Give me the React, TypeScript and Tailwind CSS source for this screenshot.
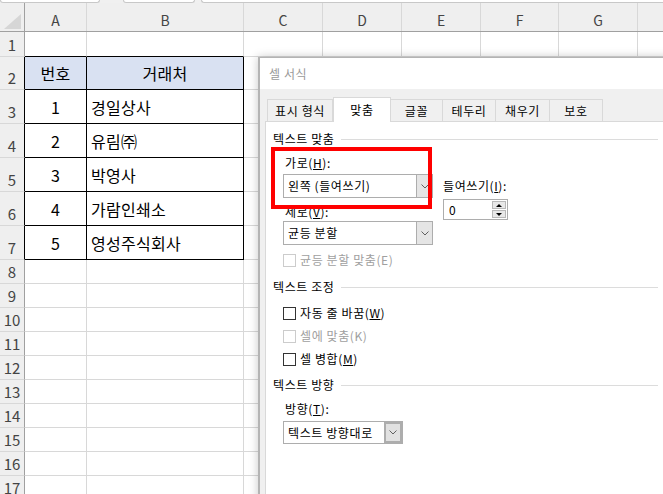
import React from 'react';

// Excel sheet with the 셀 서식 (Format Cells) dialog on top, 맞춤 tab open.

const COLS = [
  { label: 'A', w: 'w-[62px]' },
  { label: 'B', w: 'w-[157px]' },
  { label: 'C', w: 'w-[79px]' },
  { label: 'D', w: 'w-[79px]' },
  { label: 'E', w: 'w-[79px]' },
  { label: 'F', w: 'w-[78px]' },
  { label: 'G', w: 'w-[79px]' },
  { label: '', w: 'w-[40px]' },
];

const ROW_H = [
  'h-[25px]', 'h-[33px]', 'h-[34px]', 'h-[34px]', 'h-[34px]', 'h-[34px]', 'h-[34px]',
  'h-[24px]', 'h-[24px]', 'h-[24px]', 'h-[24px]', 'h-[24px]', 'h-[24px]', 'h-[24px]',
  'h-[24px]', 'h-[24px]', 'h-[24px]',
];

const DATA: Record<number, [string, string]> = {
  2: ['번호', '거래처'],
  3: ['1', '경일상사'],
  4: ['2', '유림㈜'],
  5: ['3', '박영사'],
  6: ['4', '가람인쇄소'],
  7: ['5', '영성주식회사'],
};

const inTable = (r: number) => r >= 2 && r <= 7;

function Sheet() {
  return (
    <div className="flex flex-col bg-white font-['Noto_Sans_CJK_KR','Noto_Sans',sans-serif]">
      {/* formula bar bottom edges */}
      <div className="flex h-[3px] bg-[#f0f0f0]">
        <div className="w-[100px] rounded-b-[3px] border-x border-b border-[#c8c8c8] bg-white" />
        <div className="ml-[23px] w-[72px] rounded-b-[3px] border-x border-b border-[#c8c8c8] bg-white" />
        <div className="ml-[6px] flex-1 rounded-bl-[3px] border-l border-b border-[#c8c8c8] bg-white" />
      </div>

      {/* column headers */}
      <div className="flex h-[29px] border-b border-[#a0a0a0] bg-[#efefef] text-[14px] text-[#444]">
        <div className="flex w-[25px] shrink-0 items-end justify-center border-r border-[#a0a0a0] pb-[2px]">
          <svg width="17" height="15" viewBox="0 0 17 15">
            <polygon points="17,0 17,15 0,15" fill="#d6d6d6" />
          </svg>
        </div>
        {COLS.map((c, i) => (
          <div
            key={i}
            className={`${c.w} flex shrink-0 items-center justify-center border-r border-[#d8d8d8] pt-[6px] leading-none`}
          >
            {c.label}
          </div>
        ))}
      </div>

      {ROW_H.map((h, idx) => {
        const r = idx + 1;
        const d = DATA[r];
        const table = inTable(r);
        return (
          <div key={r} className={`flex ${h} shrink-0`}>
            <div
              className={`flex w-[25px] shrink-0 items-end justify-center border-b border-[#d8d8d8] bg-[#efefef] pb-[4px] text-[15px] leading-none text-[#444] ${
                table ? 'border-r border-r-black' : 'border-r border-r-[#a0a0a0]'
              }`}
            >
              {r}
            </div>
            {COLS.map((c, ci) => {
              const tableCell = ci < 2 && table;
              const aboveTable = ci < 2 && r === 1;
              let cls = 'border-r border-b border-[#d8d8d8]';
              if (tableCell) cls = 'border-r border-b border-black';
              else if (aboveTable) cls = 'border-r border-r-[#d8d8d8] border-b border-b-black';
              const fill = tableCell && r === 2 ? 'bg-[#d9e1f2]' : '';
              const align =
                ci === 0 || r === 2 ? 'justify-center' : 'justify-start pl-[4px]';
              return (
                <div
                  key={ci}
                  className={`${c.w} flex shrink-0 items-center ${align} ${cls} ${fill} text-[16px] leading-none tracking-[0.3px] text-black`}
                >
                  {d && ci < 2 ? d[ci] : null}
                </div>
              );
            })}
          </div>
        );
      })}
    </div>
  );
}

function Chevron() {
  return (
    <svg width="8" height="5" viewBox="0 0 8 5">
      <polyline points="0.5,0.5 4,4 7.5,0.5" fill="none" stroke="#606060" strokeWidth="1" />
    </svg>
  );
}

function Combo({ text, w, thick }: { text: string; w: string; thick?: boolean }) {
  return (
    <div className={`flex ${w} h-full border border-[#adadad] bg-white`}>
      <div className="flex flex-1 items-center pl-[4px] text-[12px] leading-none text-black">{text}</div>
      {thick ? (
        <div className="flex w-[18px] items-center justify-center border-2 border-[#adadad] bg-[#e1e1e1]">
          <Chevron />
        </div>
      ) : (
        <div className="flex w-[16px] items-center justify-center border-l border-[#adadad] bg-[#e5e5e5]">
          <Chevron />
        </div>
      )}
    </div>
  );
}

function Check({ label, disabled }: { label: React.ReactNode; disabled?: boolean }) {
  return (
    <div className={`flex h-[14px] items-center gap-[4px] ${disabled ? 'text-[#a0a0a0]' : 'text-black'}`}>
      <div
        className={`h-[13px] w-[13px] border bg-white ${disabled ? 'border-[#cccccc]' : 'border-[#333333]'}`}
      />
      <span className="text-[12px] leading-none">{label}</span>
    </div>
  );
}

function GroupHeader({ title, className }: { title: string; className: string }) {
  return (
    <div className={`flex h-[16px] items-center gap-[6px] pl-[7px] pr-[9px] ${className}`}>
      <span className="text-[12px] leading-none text-black">{title}</span>
      <div className="h-px flex-1 bg-[#dcdcdc]" />
    </div>
  );
}

const TABS = [
  { label: '표시 형식', w: 'w-[66px]' },
  { label: '맞춤', w: 'w-[58px]' },
  { label: '글꼴', w: 'w-[52px]' },
  { label: '테두리', w: 'w-[53px]' },
  { label: '채우기', w: 'w-[54px]' },
  { label: '보호', w: 'w-[53px]' },
];

function FormatDialog() {
  return (
    <div className="absolute left-[258px] top-[57px] flex h-[460px] w-[420px] flex-col border-l-2 border-t border-[#b4b4b4] bg-[#f0f0f0] font-['Noto_Sans_CJK_KR','Noto_Sans',sans-serif] tracking-[0.6px] shadow-[0_0_9px_rgba(0,0,0,0.22)]">
      {/* title bar */}
      <div className="flex h-[31px] shrink-0 items-center bg-white pl-[9px] text-[12px] leading-none text-[#9a9a9a]">
        셀 서식
      </div>

      {/* tabs */}
      <div className="flex h-[32px] shrink-0 items-end pl-[7px]">
        {TABS.map((t, i) =>
          i === 1 ? (
            <div
              key={t.label}
              className={`${t.w} relative -mb-px flex h-[25px] items-center justify-center border-x border-t border-[#d9d9d9] bg-white pb-[1px] text-[12px] leading-none text-black`}
            >
              {t.label}
            </div>
          ) : (
            <div
              key={t.label}
              className={`${t.w} flex h-[22px] items-center justify-center border-t border-r border-[#d9d9d9] ${
                i === 0 ? 'border-l' : ''
              } bg-[#f0f0f0] text-[12px] leading-none text-black`}
            >
              {t.label}
            </div>
          ),
        )}
      </div>

      {/* content panel */}
      <div className="ml-[5px] mr-[10px] flex flex-1 flex-col border-l border-t border-r border-[#d9d9d9] bg-white text-[12px] leading-none text-black">
        <GroupHeader title="텍스트 맞춤" className="mt-[9px]" />

        <div className="flex pl-[17px]">
          <div className="flex w-[150px] flex-col">
            <div className="mt-[9px] flex h-[14px] items-center pl-[2px]">
              가로(<u>H</u>):
            </div>
            <div className="mt-[4px] h-[24px]">
              <Combo text="왼쪽 (들여쓰기)" w="w-[150px]" />
            </div>
            <div className="mt-[7px] flex h-[14px] items-center pl-[2px]">
              세로(<u>V</u>):
            </div>
            <div className="mt-[2px] h-[24px]">
              <Combo text="균등 분할" w="w-[150px]" />
            </div>
          </div>
          <div className="ml-[10px] flex flex-col">
            <div className="mt-[32px] flex h-[14px] items-center">
              들여쓰기(<u>I</u>):
            </div>
            <div className="mt-[6px] flex h-[21px] w-[65px] border border-[#adadad] bg-white">
              <div className="flex flex-1 items-center pl-[5px]">0</div>
              <div className="my-[1px] mr-[1px] flex w-[14px] flex-col gap-px">
                <div className="flex flex-1 items-center justify-center border border-[#b8b8b8] bg-[#e8e8e8]">
                  <svg width="6" height="3" viewBox="0 0 6 3">
                    <polygon points="3,0 6,3 0,3" fill="#000" />
                  </svg>
                </div>
                <div className="flex flex-1 items-center justify-center border border-[#b8b8b8] bg-[#e8e8e8]">
                  <svg width="6" height="3" viewBox="0 0 6 3">
                    <polygon points="0,0 6,0 3,3" fill="#000" />
                  </svg>
                </div>
              </div>
            </div>
          </div>
        </div>

        <div className="mt-[8px] pl-[17px]">
          <Check label="균등 분할 맞춤(E)" disabled />
        </div>

        <GroupHeader title="텍스트 조정" className="mt-[12px]" />
        <div className="mt-[11px] pl-[17px]">
          <Check label={<>자동 줄 바꿈(<u>W</u>)</>} />
        </div>
        <div className="mt-[9px] pl-[17px]">
          <Check label="셀에 맞춤(K)" disabled />
        </div>
        <div className="mt-[9px] pl-[17px]">
          <Check label={<>셀 병합(<u>M</u>)</>} />
        </div>

        <GroupHeader title="텍스트 방향" className="mt-[11px]" />
        <div className="mt-[9px] flex h-[14px] items-center pl-[19px]">
          방향(<u>T</u>):
        </div>
        <div className="mt-[5px] h-[23px] pl-[17px]">
          <Combo text="텍스트 방향대로" w="w-[120px]" thick />
        </div>
      </div>
    </div>
  );
}

export default function App() {
  return (
    <div className="relative h-[494px] w-[663px] overflow-hidden bg-white">
      <Sheet />
      <FormatDialog />
      {/* red highlight around 가로 */}
      <div className="pointer-events-none absolute left-[271px] top-[147px] h-[62px] w-[161px] border-[4px] border-[#ff0000]" />
    </div>
  );
}
